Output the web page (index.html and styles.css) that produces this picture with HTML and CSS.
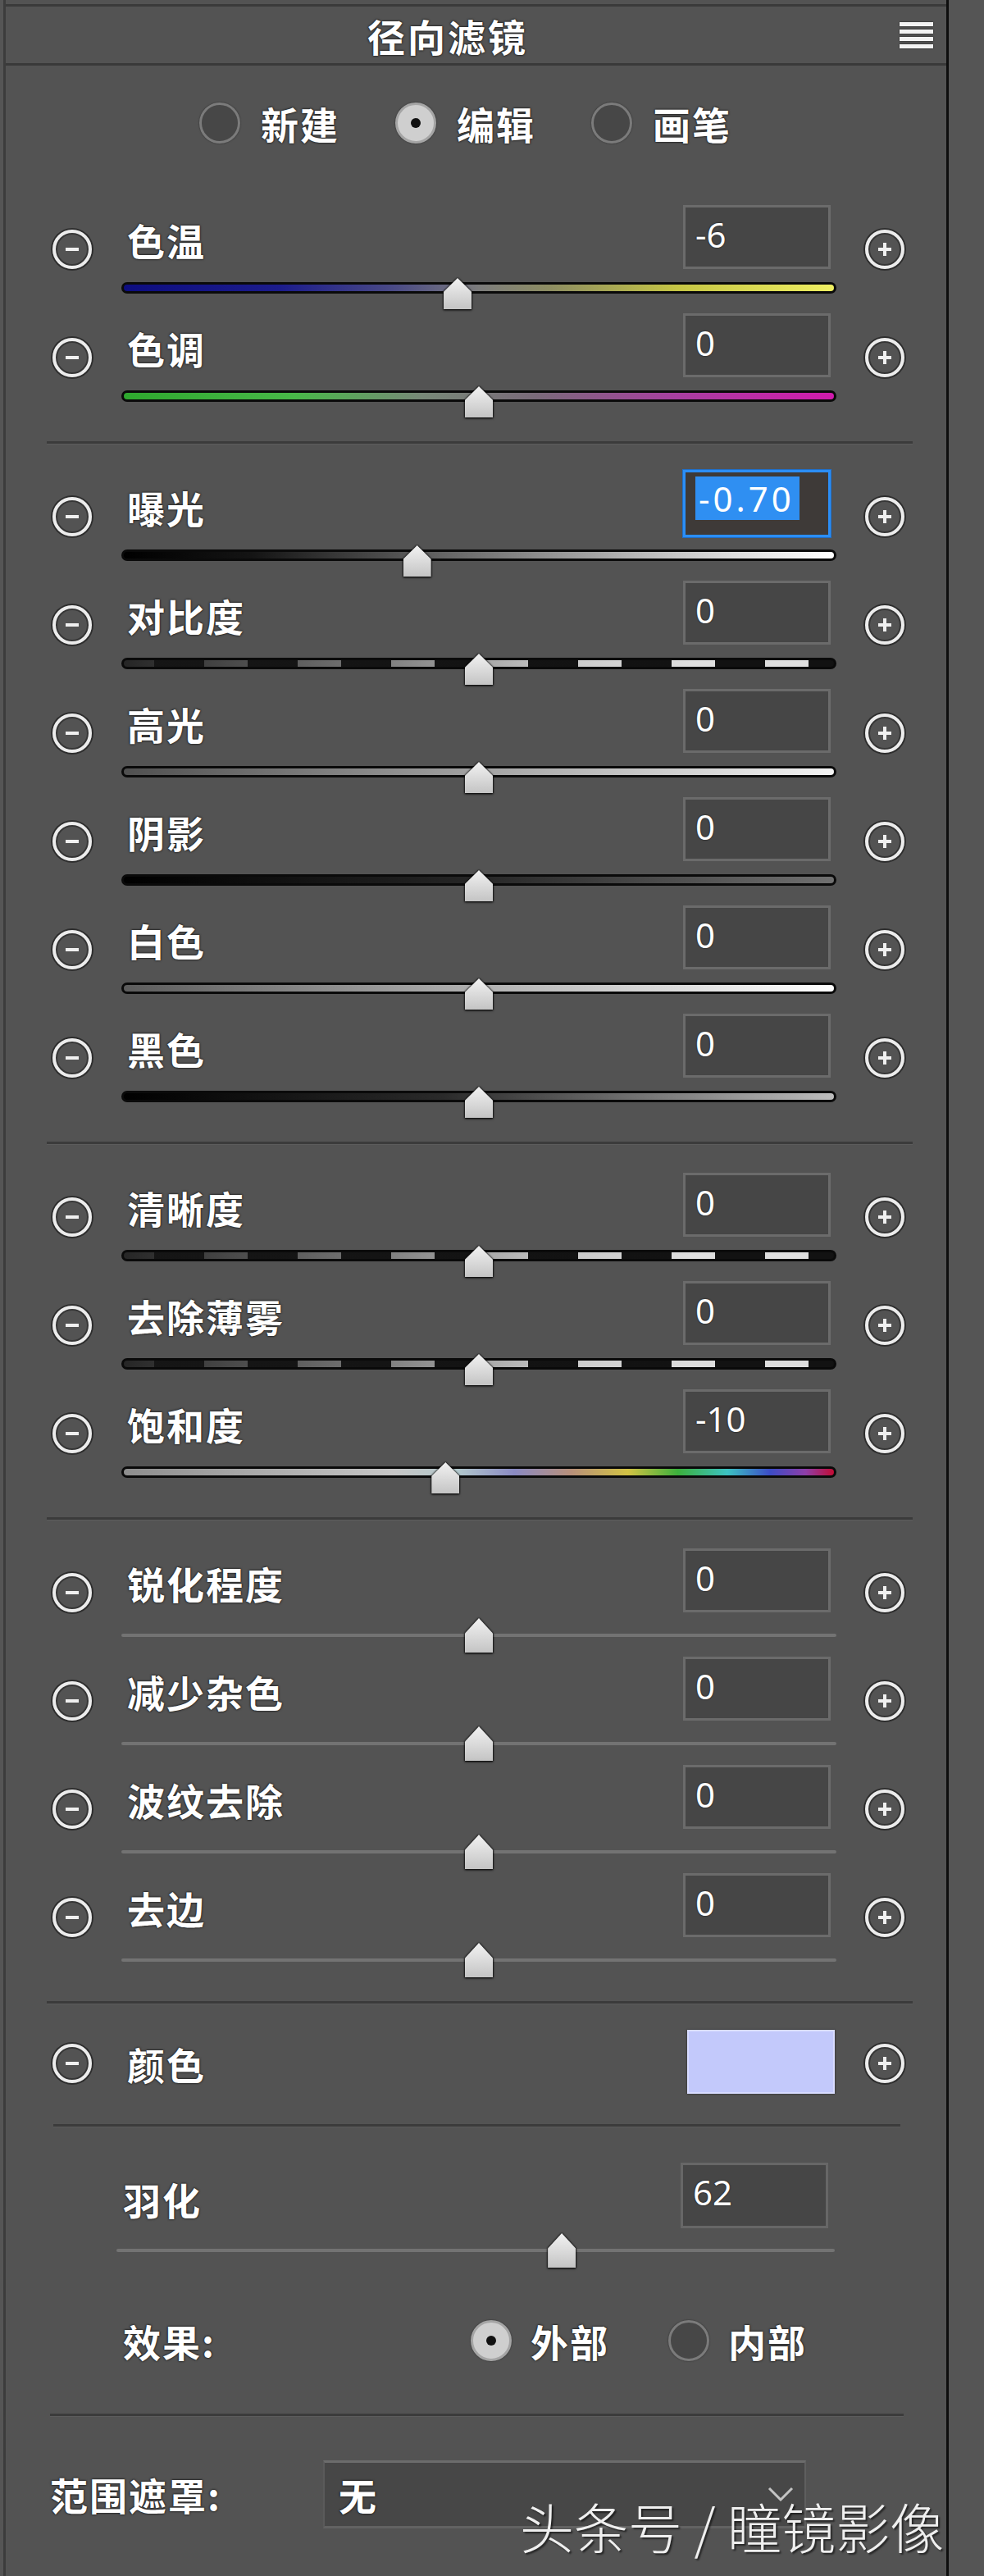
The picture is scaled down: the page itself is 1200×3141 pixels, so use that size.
FILE: index.html
```html
<!DOCTYPE html>
<html lang="zh-CN">
<head>
<meta charset="utf-8">
<title>径向滤镜</title>
<link rel="stylesheet" href="styles.css">
</head>
<body>
<div class="frame">
  <div class="head">
    <span class="title">径向滤镜</span>
    <span class="menu"><i></i><i></i><i></i><i></i></span>
  </div>
  <div class="mode">
    <span class="radio first"></span><span class="rlbl">新建</span>
    <span class="radio on"></span><span class="rlbl">编辑</span>
    <span class="radio"></span><span class="rlbl">画笔</span>
  </div>

  <section class="sec">
    <div class="row">
      <div class="row-top"><span class="ctl minus"></span><span class="lbl">色温</span><span class="val">-6</span><span class="ctl plus"></span></div>
      <div class="track-line"><div class="track t-temp"><i class="thumb" style="left:47%"></i></div></div>
    </div>
    <div class="row">
      <div class="row-top"><span class="ctl minus"></span><span class="lbl">色调</span><span class="val">0</span><span class="ctl plus"></span></div>
      <div class="track-line"><div class="track t-tint"><i class="thumb" style="left:50%"></i></div></div>
    </div>
  </section>
  <div class="sep"></div>

  <section class="sec">
    <div class="row">
      <div class="row-top"><span class="ctl minus"></span><span class="lbl">曝光</span><span class="val sel"><span class="hl">-0.70</span></span><span class="ctl plus"></span></div>
      <div class="track-line"><div class="track t-expo"><i class="thumb" style="left:41.3%"></i></div></div>
    </div>
    <div class="row">
      <div class="row-top"><span class="ctl minus"></span><span class="lbl">对比度</span><span class="val">0</span><span class="ctl plus"></span></div>
      <div class="track-line"><div class="track t-dash"><i class="thumb" style="left:50%"></i></div></div>
    </div>
    <div class="row">
      <div class="row-top"><span class="ctl minus"></span><span class="lbl">高光</span><span class="val">0</span><span class="ctl plus"></span></div>
      <div class="track-line"><div class="track t-high"><i class="thumb" style="left:50%"></i></div></div>
    </div>
    <div class="row">
      <div class="row-top"><span class="ctl minus"></span><span class="lbl">阴影</span><span class="val">0</span><span class="ctl plus"></span></div>
      <div class="track-line"><div class="track t-shadow"><i class="thumb" style="left:50%"></i></div></div>
    </div>
    <div class="row">
      <div class="row-top"><span class="ctl minus"></span><span class="lbl">白色</span><span class="val">0</span><span class="ctl plus"></span></div>
      <div class="track-line"><div class="track t-white"><i class="thumb" style="left:50%"></i></div></div>
    </div>
    <div class="row">
      <div class="row-top"><span class="ctl minus"></span><span class="lbl">黑色</span><span class="val">0</span><span class="ctl plus"></span></div>
      <div class="track-line"><div class="track t-black"><i class="thumb" style="left:50%"></i></div></div>
    </div>
  </section>
  <div class="sep"></div>

  <section class="sec">
    <div class="row">
      <div class="row-top"><span class="ctl minus"></span><span class="lbl">清晰度</span><span class="val">0</span><span class="ctl plus"></span></div>
      <div class="track-line"><div class="track t-dash"><i class="thumb" style="left:50%"></i></div></div>
    </div>
    <div class="row">
      <div class="row-top"><span class="ctl minus"></span><span class="lbl">去除薄雾</span><span class="val">0</span><span class="ctl plus"></span></div>
      <div class="track-line"><div class="track t-dash"><i class="thumb" style="left:50%"></i></div></div>
    </div>
    <div class="row">
      <div class="row-top"><span class="ctl minus"></span><span class="lbl">饱和度</span><span class="val">-10</span><span class="ctl plus"></span></div>
      <div class="track-line"><div class="track t-sat"><i class="thumb" style="left:45.3%"></i></div></div>
    </div>
  </section>
  <div class="sep"></div>

  <section class="sec">
    <div class="row">
      <div class="row-top"><span class="ctl minus"></span><span class="lbl">锐化程度</span><span class="val">0</span><span class="ctl plus"></span></div>
      <div class="track-line"><div class="track thin"><i class="thumb" style="left:50%"></i></div></div>
    </div>
    <div class="row">
      <div class="row-top"><span class="ctl minus"></span><span class="lbl">减少杂色</span><span class="val">0</span><span class="ctl plus"></span></div>
      <div class="track-line"><div class="track thin"><i class="thumb" style="left:50%"></i></div></div>
    </div>
    <div class="row">
      <div class="row-top"><span class="ctl minus"></span><span class="lbl">波纹去除</span><span class="val">0</span><span class="ctl plus"></span></div>
      <div class="track-line"><div class="track thin"><i class="thumb" style="left:50%"></i></div></div>
    </div>
    <div class="row">
      <div class="row-top"><span class="ctl minus"></span><span class="lbl">去边</span><span class="val">0</span><span class="ctl plus"></span></div>
      <div class="track-line"><div class="track thin"><i class="thumb" style="left:50%"></i></div></div>
    </div>
  </section>
  <div class="sep"></div>

  <div class="color-row">
    <span class="ctl minus"></span><span class="lbl">颜色</span><span class="swatch"></span><span class="ctl plus"></span>
  </div>
  <div class="sep sep-short"></div>

  <div class="feather-top">
    <span class="lbl">羽化</span><span class="val">62</span>
  </div>
  <div class="feather-line"><div class="track thin wide"><i class="thumb" style="left:62%"></i></div></div>
  <div class="effect">
    <span class="lbl">效果:</span>
    <span class="radio on"></span><span class="rlbl">外部</span>
    <span class="radio"></span><span class="rlbl">内部</span>
  </div>
  <div class="sep sep-end"></div>

  <div class="mask-row">
    <span class="lbl">范围遮罩:</span>
    <span class="select"><span class="select-text">无</span>
      <svg class="chev" width="34" height="22" viewBox="0 0 34 22"><polyline points="3,4 17,18 31,4" fill="none" stroke="#c4c4c4" stroke-width="3"/></svg>
    </span>
  </div>

  <div class="watermark">头条号 / 瞳镜影像</div>
</div>
</body>
</html>
```

FILE: styles.css
```css
html, body {
  margin: 0;
  padding: 0;
}
body {
  background: #555555;
  font-family: "Noto Sans CJK SC", "Noto Sans", sans-serif;
  color: #ffffff;
  height: 3141px;
  overflow: hidden;
}
.frame {
  position: relative;
  margin-left: 4px;
  width: 1147px;
  height: 3141px;
  box-sizing: content-box;
  padding-top: 5px;
  border-left: 3px solid #3c3c3c;
  border-right: 3px solid #0e0e0e;
  background: #535353;
}

/* header */
.head {
  height: 69px;
  display: flex;
  align-items: center;
  border-top: 3px solid #3a3a3a;
  border-bottom: 3px solid #393939;
}
.title {
  margin-left: 441px;
  font-size: 46px;
  line-height: 48px;
  letter-spacing: 3px;
  font-weight: 700;
  text-shadow: 0 0 2px #111, 0 0 3px #222;
}
.menu {
  margin-left: auto;
  margin-right: 16px;
  width: 41px;
  display: flex;
  flex-direction: column;
  gap: 4px;
}
.menu i {
  display: block;
  height: 5px;
  background: #f2f2f2;
  box-shadow: 0 0 2px #111;
}

/* mode radios */
.mode {
  height: 146px;
  box-sizing: border-box;
  padding-top: 45px;
  display: flex;
  align-items: flex-start;
}
.radio {
  width: 50px;
  height: 50px;
  border-radius: 50%;
  box-sizing: border-box;
  border: 3px solid #7b7b7b;
  background: #474747;
  box-shadow: 0 0 2px #2a2a2a;
  margin-left: 68px;
  position: relative;
  flex: none;
}
.radio.first { margin-left: 236px; }
.radio.on {
  background: #cfcfcf;
  border-color: #a5a5a5;
}
.radio.on::after {
  content: "";
  position: absolute;
  left: 50%;
  top: 50%;
  width: 12px;
  height: 12px;
  margin: -6px 0 0 -6px;
  border-radius: 50%;
  background: #111;
}
.rlbl {
  margin-left: 25px;
  font-size: 46px;
  line-height: 50px;
  letter-spacing: 2px;
  font-weight: 700;
  text-shadow: 0 0 2px #111, 0 0 3px #222;
}

/* slider rows */
.row {
  height: 132px;
}
.row-top {
  height: 104px;
  display: flex;
  align-items: flex-start;
}
.ctl {
  flex: none;
  width: 48px;
  height: 48px;
  box-sizing: border-box;
  border-radius: 50%;
  border: 4px solid #ececec;
  box-shadow: 0 0 0 2px rgba(0, 0, 0, 0.45), inset 0 0 0 2px rgba(0, 0, 0, 0.35);
  position: relative;
  margin-top: 54px;
}
.ctl::before, .ctl::after {
  content: "";
  position: absolute;
  left: 50%;
  top: 50%;
  background: #f0f0f0;
}
.ctl::before {
  width: 16px;
  height: 4px;
  margin: -2px 0 0 -8px;
}
.minus { margin-left: 57px; }
.plus {
  margin-left: 42px;
  margin-right: 51px;
}
.plus::after {
  width: 4px;
  height: 16px;
  margin: -8px 0 0 -2px;
}
.minus::after { display: none; }

.lbl {
  flex: 1;
  margin-left: 43px;
  margin-top: 42px;
  font-size: 46px;
  line-height: 48px;
  letter-spacing: 2px;
  font-weight: 700;
  white-space: nowrap;
  text-shadow: 0 0 2px #111, 0 0 3px #222;
}
.val {
  flex: none;
  width: 180px;
  height: 78px;
  margin-top: 24px;
  box-sizing: border-box;
  border: 3px solid #6b6b6b;
  background: #464646;
  padding: 12px 0 0 12px;
  font-family: "Noto Sans", sans-serif;
  font-size: 42px;
  line-height: 42px;
  color: #ffffff;
  text-shadow: 0 0 2px #111;
}
.val.sel {
  margin-top: 21px;
  height: 82px;
  border-color: #2b8ef6;
  box-shadow: 0 0 0 1px #1f6fc8;
  background: #3e3a38;
  padding: 5px 0 0 12px;
}
.hl {
  display: inline-block;
  background: #2f8ff2;
  color: #ffffff;
  line-height: 53px;
  padding: 0 6px 0 4px;
  letter-spacing: 4px;
  text-shadow: none;
}

.track-line {
  height: 28px;
  padding-left: 141px;
}
.track {
  position: relative;
  width: 872px;
  height: 14px;
  margin-top: 14px;
  box-sizing: border-box;
  border: 3px solid #0a0a0a;
  border-radius: 7px;
}
.thumb {
  position: absolute;
  top: -8px;
  width: 34px;
  height: 38px;
  margin-left: -17px;
  filter: drop-shadow(0 0 1px #000) drop-shadow(0 1px 1px #111);
  z-index: 2;
}
.thumb::before {
  content: "";
  position: absolute;
  inset: 0;
  clip-path: polygon(50% 0, 100% 44%, 100% 100%, 0 100%, 0 44%);
  background: linear-gradient(180deg, #f2f2f2, #c4c4c4);
}

.t-temp {
  background: linear-gradient(90deg, #0d0d80 0%, #1c1c8c 22%, #4a4a86 38%, #7c7c7c 50%, #8d8d62 60%, #c5c544 78%, #efef62 100%);
}
.t-tint {
  background: linear-gradient(90deg, #2ea82e 0%, #48b848 24%, #778877 42%, #7a6a7a 58%, #a83ea0 78%, #d01aac 100%);
}
.t-expo {
  background: linear-gradient(90deg, #000 0%, #141414 18%, #6e6e6e 48%, #c8c8c8 78%, #ffffff 100%);
}
.t-high {
  background: linear-gradient(90deg, #505050 0%, #9a9a9a 45%, #f4f4f4 100%);
}
.t-shadow {
  background: linear-gradient(90deg, #000 0%, #262626 50%, #707070 100%);
}
.t-white {
  background: linear-gradient(90deg, #5c5c5c 0%, #a8a8a8 45%, #ffffff 100%);
}
.t-black {
  background: linear-gradient(90deg, #000 0%, #2a2a2a 45%, #bcbcbc 100%);
}
.t-dash {
  background:
    linear-gradient(90deg, rgba(22, 22, 22, 0.92) 0%, rgba(22, 22, 22, 0.55) 32%, rgba(22, 22, 22, 0.1) 62%, rgba(22, 22, 22, 0) 80%),
    repeating-linear-gradient(90deg, #dedede 0 37px, #121212 37px 98px, #dedede 98px 114px);
}
.t-sat {
  background: linear-gradient(90deg, #8e8e8e 0%, #c6c6c6 38%, #b2c8cc 47%, #8a8ac2 55%, #b8907a 63%, #d2c244 71%, #3cb03c 78%, #3cc2c2 85%, #3c4cc6 91%, #8e3ea8 96%, #c20c34 100%);
}
.track.thin {
  height: 4px;
  margin-top: 24px;
  border: 0;
  border-radius: 2px;
  background: #737373;
}
.track.thin .thumb {
  top: -19px;
  height: 42px;
}

/* separators */
.sep {
  height: 3px;
  background: #3b3b3b;
  border-bottom: 1px solid #5c5c5c;
  margin: 48px 41px 10px 50px;
}
.sep-short {
  margin: 0 56px 0 58px;
}
.sep-end {
  margin: 25px 52px 0 54px;
}

/* color row */
.color-row {
  height: 136px;
  display: flex;
  align-items: flex-start;
}
.color-row .ctl { margin-top: 38px; }
.color-row .lbl { margin-top: 38px; }
.color-row .plus { margin-left: 37px; }
.swatch {
  flex: none;
  width: 180px;
  height: 78px;
  margin-top: 21px;
  margin-left: 5px;
  box-sizing: border-box;
  background: #c3c9fb;
  border: 2px solid #d8dcff;
  box-shadow: 0 0 2px #222;
}

/* feather */
.feather-top {
  height: 130px;
  display: flex;
  align-items: flex-start;
}
.feather-top .lbl {
  margin-left: 143px;
  margin-top: 63px;
}
.feather-top .val {
  margin-top: 43px;
  height: 80px;
  margin-right: 144px;
  border-color: #676767;
}
.feather-line {
  height: 48px;
  padding-left: 135px;
}
.track.thin.wide {
  width: 876px;
  margin-top: 18px;
}

/* effect */
.effect {
  height: 128px;
  display: flex;
  align-items: center;
}
.effect .lbl {
  flex: none;
  width: 424px;
  margin: 0 0 0 143px;
}
.effect .radio { margin-left: 72px; }
.effect .lbl + .radio { margin-left: 0; }
.effect .rlbl { margin-left: 23px; }

/* mask */
.mask-row {
  height: 188px;
  display: flex;
  align-items: center;
}
.mask-row .lbl {
  flex: none;
  width: 333px;
  margin: 0 0 0 54px;
}
.select {
  width: 589px;
  height: 83px;
  box-sizing: border-box;
  display: flex;
  align-items: center;
  background: #474747;
  border-top: 3px solid #6c6c6c;
  border-bottom: 3px solid #626262;
  border-left: 2px solid #5a5a5a;
  border-right: 2px solid #5f5f5f;
}
.select-text {
  margin-left: 17px;
  font-size: 46px;
  line-height: 48px;
  font-weight: 700;
  text-shadow: 0 0 2px #111, 0 0 3px #222;
}
.chev {
  margin-left: auto;
  margin-right: 12px;
}

.watermark {
  position: absolute;
  left: 627px;
  top: 3046px;
  font-size: 66px;
  line-height: 66px;
  font-weight: 300;
  color: #efefef;
  white-space: nowrap;
  text-shadow: 2px 2px 2px rgba(0, 0, 0, 0.55);
}
```
